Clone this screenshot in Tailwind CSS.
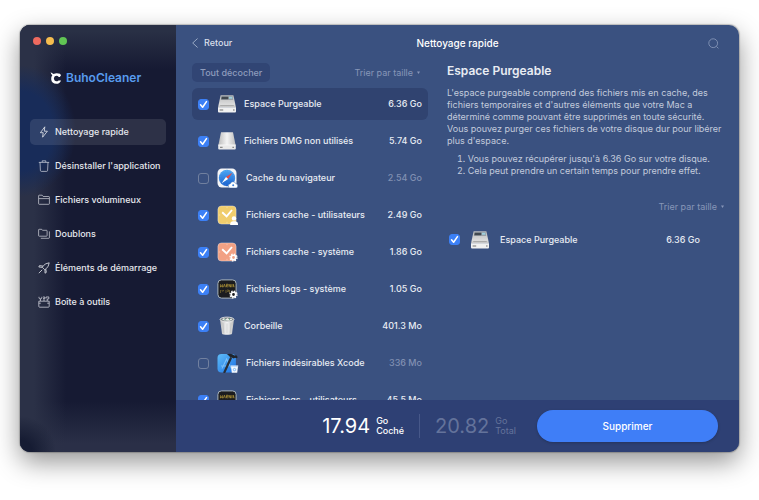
<!DOCTYPE html>
<html lang="fr">
<head>
<meta charset="utf-8">
<title>BuhoCleaner</title>
<script src="https://cdn.jsdelivr.net/npm/@tailwindcss/browser@4"></script>
</head>
<body class="h-screen overflow-hidden bg-white px-5 pt-[25px] pb-12 font-['Inter','Liberation_Sans',sans-serif] text-[9px] text-white">

<svg class="absolute size-0" aria-hidden="true">
  <defs>
    <linearGradient id="metal" x1="0" y1="0" x2="0" y2="1"><stop offset="0" stop-color="#b9babb"/><stop offset=".75" stop-color="#dcdcdc"/><stop offset="1" stop-color="#c4c4c4"/></linearGradient>
    <linearGradient id="silver" x1="0" y1="0" x2="1" y2="0"><stop offset="0" stop-color="#bcbcbc"/><stop offset=".5" stop-color="#f4f4f4"/><stop offset="1" stop-color="#bdbdbd"/></linearGradient>
    <linearGradient id="sky" x1="0" y1="0" x2="0" y2="1"><stop offset="0" stop-color="#4ba6f2"/><stop offset="1" stop-color="#1b62cf"/></linearGradient>
    <linearGradient id="xc" x1="0" y1="0" x2="1" y2="1"><stop offset="0" stop-color="#5fbdf8"/><stop offset="1" stop-color="#1b6fe4"/></linearGradient>
    <symbol id="disk" viewBox="0 0 20 20">
      <path d="M3.6 1.2h12.8l2.6 12.3H1z" fill="url(#metal)"/>
      <path d="M1 13.3h18v4.2a1 1 0 0 1-1 1H2a1 1 0 0 1-1-1z" fill="#f1f1f1"/>
      <path d="M4.4 2.2h11.2l.6 3.6H3.8z" fill="#8d959b"/>
      <path d="M4.8 2.7h6.4v2.6H4.4z" fill="#41484f"/><path d="M12 2.7h3.2l.3 2H12z" fill="#9fd0de"/>
      <path d="M3.2 11.6h13.6" stroke="#9b9b9b" stroke-width=".8"/>
      <path d="M2.6 16h3.6M16 16h1.6" stroke="#9a9a9a" stroke-width="1.4"/>
    </symbol>
    <symbol id="dmg" viewBox="0 0 20 20">
      <path d="M4 1.2h12l2.6 13H1.4z" fill="url(#silver)"/>
      <path d="M1.2 13.8h17.6v3.7a1 1 0 0 1-1 1H2.2a1 1 0 0 1-1-1z" fill="#e9e9e9"/>
      <path d="M1.4 14h17.2" stroke="#fff" stroke-width=".6"/>
      <path d="M3 16.3h2.6M15.4 16.3H17" stroke="#8b8b8b" stroke-width="1.2"/>
    </symbol>
    <symbol id="safari" viewBox="0 0 22 20">
      <rect x=".5" y=".5" width="19" height="19" rx="4.4" fill="#f4f5f7"/>
      <circle cx="10" cy="10" r="8.2" fill="url(#sky)"/>
      <circle cx="10" cy="10" r="7.200" fill="none" stroke="#b9dcfa" stroke-opacity=".5" stroke-width=".8" stroke-dasharray=".4 1.43"/>
      <path d="M15.4 4.8 9 8.9l2.1 2.2z" fill="#ef4a3f"/><path d="m4.6 15.2 4.400-6.300 2.1 2.2z" fill="#fff"/>
      <path d="M12.8 20a2.2 2.2 0 0 1 .5-4.3 2.8 2.8 0 0 1 5.3-.2A2.4 2.4 0 0 1 19.5 20z" fill="#fff" stroke="#3a6fb5" stroke-width=".5"/>
      <circle cx="16.2" cy="17.2" r="1" fill="#3a7fd8"/>
    </symbol>
    <symbol id="clock-face" viewBox="0 0 22 20">
      <rect x=".9" y=".9" width="18.2" height="18.2" rx="3.6" stroke="#fff" stroke-opacity=".35" stroke-width="1"/>
      <path d="m5.2 7.2 4.4 4.2L15 5" fill="none" stroke="#fff" stroke-width="1.9"/>
      <path d="M10 1.8v1.4M10 16.8v1.4M1.8 10h1.4" stroke="#fff" stroke-opacity=".5" stroke-width=".7"/>
    </symbol>
    <symbol id="gear" viewBox="0 0 10 10">
      <circle cx="5" cy="5" r="2.5" fill="none" stroke="#fff" stroke-width="1.9"/>
      <circle cx="5" cy="5" r="3.9" fill="none" stroke="#fff" stroke-width="1.4" stroke-dasharray="1.6 1.46"/>
    </symbol>
    <symbol id="cache-user" viewBox="0 0 22 20">
      <use href="#clock-face" fill="#f0cd6c"/>
      <circle cx="17" cy="13.4" r="2.2" fill="#fff"/><path d="M13.2 20v-1a3 3 0 0 1 3-2.8h1.8a3 3 0 0 1 3 2.8v1z" fill="#fff"/>
    </symbol>
    <symbol id="cache-system" viewBox="0 0 22 20">
      <use href="#clock-face" fill="#f2a184"/>
      <use href="#gear" x="12" y="11" width="9" height="9"/>
    </symbol>
    <symbol id="log-face" viewBox="0 0 22 20">
      <rect x=".9" y=".9" width="18.2" height="18.2" rx="3.6" fill="#1b1c1f" stroke="#a9b4ba" stroke-width="1"/>
      <path d="M3.4 5.2v3l1-1.6 1 1.6v-3M6.4 8.2l1-3 1 3M9.4 8.2v-3h1.4v1.6H9.4l1.4 1.4M12 8.2v-3l1.6 3v-3M14.8 5.2v3M16.2 8.2v-3l1 3" stroke="#c7a83a" stroke-width=".6" fill="none"/>
      <path d="M3.6 11v3M4.8 11l1 1.4 1-1.4M9 11v3M10 11h1.6v1.4H10M12.6 11v3" stroke="#9b8435" stroke-width=".6" fill="none"/>
    </symbol>
    <symbol id="log-system" viewBox="0 0 22 20">
      <use href="#log-face"/><circle cx="16.5" cy="15.5" r="2" fill="#1b1c1f"/>
      <use href="#gear" x="12" y="11" width="9" height="9"/>
    </symbol>
    <symbol id="log-user" viewBox="0 0 22 20"><use href="#log-face"/></symbol>
    <symbol id="bin" viewBox="0 0 20 20">
      <path d="M3 3.2h14l-2 14.6c-.2 1.4-9.8 1.4-10 0z" fill="url(#silver)"/>
      <ellipse cx="10" cy="3.4" rx="7" ry="2.3" fill="#7b8286" stroke="#eee" stroke-width=".8"/>
      <path d="M5 3.4 7 2l1.6 1.5L10.5 2l1.8 1.5L14.4 2.6l.8 1.2-3 1-5-.2z" fill="#eceee8"/>
      <path d="m7.6 3.2 1 1M12 2.6l1 .9" stroke="#3a9c6a" stroke-width=".9"/>
      <path d="m6 7 .8 10M10 7.4v10M14 7l-.8 10" stroke="#b5b5b5" stroke-width=".5"/>
    </symbol>
    <symbol id="xcode" viewBox="0 0 22 20">
      <rect x=".5" y="1" width="18.4" height="18.4" rx="4" fill="url(#xc)"/>
      <path d="M5 15.5 9.6 6l4.8 9.5M4 13h8" stroke="#a4dbff" stroke-opacity=".6" stroke-width="1.1" fill="none"/>
      <path d="m7.4 19.2 6.4-14" stroke="#2a2f38" stroke-width="2.2" stroke-linecap="round"/>
      <path d="M9.6 1.6c3.2-1.8 5.6-.8 8 1l1.8-.4 1.4 2-1.4 1-1.4-.4-1.2.8-4.4-2c-.6-1.2-1.4-1.6-2.8-2z" fill="#20242b"/>
      <path d="M14 13.2h7l-.8 6.6h-5.4z" fill="#f2f7fd"/><path d="M13.8 13h7.4" stroke="#cfe3fa" stroke-width="1.2"/>
      <circle cx="17.5" cy="16.6" r="1.2" fill="none" stroke="#5aa2ee" stroke-width=".7"/>
    </symbol>
    <symbol id="tick" viewBox="0 0 10 10"><path d="M2.3 5.3 4.2 7.5 7.7 2.4" fill="none" stroke="#fff" stroke-width="1.4" stroke-linecap="round" stroke-linejoin="round"/></symbol>
  </defs>
</svg>

<div class="flex h-full overflow-hidden rounded-[10px] bg-[#3a5180] shadow-[0_0_1px_1px_rgba(0,0,0,0.2),0_10px_26px_rgba(0,0,0,0.42)]">

  <aside class="flex w-[156px] shrink-0 flex-col bg-[#161a33] bg-[radial-gradient(circle_at_0%_100%,#161c33_12px,transparent_36px),radial-gradient(ellipse_56px_66px_at_0px_106px,#182c59_60%,transparent_100%),linear-gradient(to_right,#2b3147_14px,transparent_46px),linear-gradient(to_top,#2a2f47_8px,transparent_50px),linear-gradient(to_bottom,#293045_6px,transparent_44px)] px-[10px] pt-3">
    <div class="flex gap-[5px] pl-[3px]">
      <button class="size-2 rounded-full bg-[#ee6a5f]" aria-label="Fermer"></button>
      <button class="size-2 rounded-full bg-[#f5bd4f]" aria-label="Réduire"></button>
      <button class="size-2 rounded-full bg-[#61c554]" aria-label="Agrandir"></button>
    </div>
    <div class="mt-[25px] flex h-4 items-center gap-1 pl-5">
      <svg class="size-3" viewBox="0 0 12 12" aria-hidden="true">
        <path d="M.6.200 3.600 1.900Q6.500.8 10 1.800L11 3.200 9.800 5H8.800Q6.800 2.900 4.600 4.600 3.200 6.300 4.400 8.300 6.300 10.300 8.600 8.400H11Q9.800 11.800 6.300 11.800 1.600 11.600 1.200 7.200 1 4.600 2.300 3.200 1 2 .6.200z" fill="#fff"/>
      </svg>
      <span class="text-[12px] font-semibold text-[#589cee]">BuhoCleaner</span>
    </div>
    <nav class="mt-[33px] flex flex-col gap-2 font-medium text-[#e6e8ee]">
      <a href="#" class="flex h-[26px] items-center gap-[5px] rounded-[5px] bg-white/10 pl-2">
        <svg class="size-3" viewBox="0 0 12 12" fill="none" stroke="currentColor" stroke-width=".8" stroke-linejoin="round"><path d="M6.8.8 2.4 6.7h2.8L4.6 11.2 9.4 5.2H6.3z"/></svg>Nettoyage rapide</a>
      <a href="#" class="flex h-[26px] items-center gap-[5px] pl-2">
        <svg class="size-3" viewBox="0 0 12 12" fill="none" stroke="currentColor" stroke-opacity=".8" stroke-width=".8" stroke-linejoin="round"><path d="M.8 2.4h10.4M4.2 2.2V.8h3.6v1.4M2 2.4l.4 8q.1 1 1 1h5.2q.9 0 1-1l.4-8"/></svg>Désinstaller l'application</a>
      <a href="#" class="flex h-[26px] items-center gap-[5px] pl-2">
        <svg class="size-3" viewBox="0 0 12 12" fill="none" stroke="currentColor" stroke-opacity=".8" stroke-width=".8" stroke-linejoin="round"><path d="M.6 4.6V1.8q0-.6.6-.6h3l1 1.3h5.6q.6 0 .6.6v1.5M.6 4.6h10.8v5q0 .7-.7.7H1.3q-.7 0-.7-.7z"/></svg>Fichiers volumineux</a>
      <a href="#" class="flex h-[26px] items-center gap-[5px] pl-2">
        <svg class="size-3" viewBox="0 0 12 12" fill="none" stroke="currentColor" stroke-opacity=".8" stroke-width=".8" stroke-linejoin="round"><path d="M.6 1.8q0-.5.5-.5h2.6l.8 1h4q.6 0 .6.6v4.7q0 .6-.6.6H1.2q-.6 0-.6-.6zM11.4 3.4v6.2q0 .7-.7.7H2.8"/></svg>Doublons</a>
      <a href="#" class="flex h-[26px] items-center gap-[5px] pl-2">
        <svg class="size-3" viewBox="0 0 12 12" fill="none" stroke="currentColor" stroke-width=".8" stroke-linejoin="round"><path d="M11.2.8Q6.9.9 4.2 5.2l2.6 2.6Q11.1 5 11.2.8zM5 4.1 1.5 3.6.8 5l3.300.3M7.800 7.100 8.300 10.400 7 11.200V7.800M4.200 7.800.8 11.200"/></svg>Éléments de démarrage</a>
      <a href="#" class="flex h-[26px] items-center gap-[5px] pl-2">
        <svg class="size-3" viewBox="0 0 12 12" fill="none" stroke="currentColor" stroke-opacity=".85" stroke-width=".8" stroke-linejoin="round"><path d="M.8 5.2h10.4v5.2q0 .8-.8.8H1.6q-.8 0-.8-.8zM.8 7.200h2M9.2 7.200h2M2.400 5V2.800M1 .8v1.2q0 .8 1.400.8T3.800 2V.8M5 1h1.800v1.400H5M6 2.500V5M8 1l2.800-.1v2L9.200 3V5M8 1v1.600"/></svg>Boîte à outils</a>
    </nav>
  </aside>

  <main class="flex min-w-0 flex-1 flex-col">
    <header class="grid h-9 shrink-0 grid-cols-[1fr_auto_1fr] items-center px-4">
      <a href="#" class="flex items-center gap-[6px] font-medium text-[#d9dfea]">
        <svg class="h-[10px] w-[6px]" viewBox="0 0 6 10" fill="none" stroke="#a3b1cb" stroke-width=".9"><path d="M5.6.5.7 5l4.9 4.500"/></svg>Retour</a>
      <h1 class="text-[10px] font-medium">Nettoyage rapide</h1>
      <button class="mr-1 justify-self-end" aria-label="Rechercher"><svg class="size-[11px]" viewBox="0 0 11 11" fill="none" stroke="#8595b7" stroke-width=".9"><circle cx="5.2" cy="5.2" r="4.4"/><path d="m8.4 8.4 2 2"/></svg></button>
    </header>

    <div class="flex min-h-0 flex-1 gap-[19px] pr-[15px] pl-4">
      <section class="flex w-[236px] shrink-0 flex-col gap-[6px] pt-[2px]" aria-label="Catégories">
        <div class="flex shrink-0 items-center justify-between pr-2">
          <button class="h-[19px] rounded-[5px] bg-[#314574] px-2 font-medium text-[#8e9cbc]">Tout décocher</button>
          <button class="flex items-center gap-1 text-[#8796b8]">Trier par taille<svg class="size-[3px]" viewBox="0 0 4 4" fill="currentColor"><path d="M0 .5h4L2 4z"/></svg></button>
        </div>
        <ul class="flex min-h-0 flex-1 flex-col gap-[5px] overflow-hidden font-medium text-[#e8ecf3]">
          <li class="shrink-0"><label class="flex h-8 items-center rounded-[6px] bg-[#304370] px-[6px]"><span class="grid size-[11px]"><input type="checkbox" checked class="peer col-start-1 row-start-1 size-[11px] appearance-none rounded-[3px] border border-[#71809f] checked:border-[#3c80f6] checked:bg-[#3c80f6]"><svg class="pointer-events-none invisible col-start-1 row-start-1 size-[11px] peer-checked:visible"><use href="#tick"/></svg></span><svg class="ml-2 h-5 w-5"><use href="#disk"/></svg><span class="ml-[7px] flex-1">Espace Purgeable</span><span>6.36 Go</span></label></li>
          <li class="shrink-0"><label class="flex h-8 items-center px-[6px]"><span class="grid size-[11px]"><input type="checkbox" checked class="peer col-start-1 row-start-1 size-[11px] appearance-none rounded-[3px] border border-[#71809f] checked:border-[#3c80f6] checked:bg-[#3c80f6]"><svg class="pointer-events-none invisible col-start-1 row-start-1 size-[11px] peer-checked:visible"><use href="#tick"/></svg></span><svg class="ml-2 h-5 w-5"><use href="#dmg"/></svg><span class="ml-[7px] flex-1">Fichiers DMG non utilisés</span><span>5.74 Go</span></label></li>
          <li class="shrink-0"><label class="flex h-8 items-center px-[6px]"><span class="grid size-[11px]"><input type="checkbox" class="peer col-start-1 row-start-1 size-[11px] appearance-none rounded-[3px] border border-[#71809f] checked:border-[#3c80f6] checked:bg-[#3c80f6]"><svg class="pointer-events-none invisible col-start-1 row-start-1 size-[11px] peer-checked:visible"><use href="#tick"/></svg></span><svg class="ml-2 h-5 w-[22px]"><use href="#safari"/></svg><span class="ml-[7px] flex-1">Cache du navigateur</span><span class="text-[#8190b2]">2.54 Go</span></label></li>
          <li class="shrink-0"><label class="flex h-8 items-center px-[6px]"><span class="grid size-[11px]"><input type="checkbox" checked class="peer col-start-1 row-start-1 size-[11px] appearance-none rounded-[3px] border border-[#71809f] checked:border-[#3c80f6] checked:bg-[#3c80f6]"><svg class="pointer-events-none invisible col-start-1 row-start-1 size-[11px] peer-checked:visible"><use href="#tick"/></svg></span><svg class="ml-2 h-5 w-[22px]"><use href="#cache-user"/></svg><span class="ml-[7px] flex-1">Fichiers cache - utilisateurs</span><span>2.49 Go</span></label></li>
          <li class="shrink-0"><label class="flex h-8 items-center px-[6px]"><span class="grid size-[11px]"><input type="checkbox" checked class="peer col-start-1 row-start-1 size-[11px] appearance-none rounded-[3px] border border-[#71809f] checked:border-[#3c80f6] checked:bg-[#3c80f6]"><svg class="pointer-events-none invisible col-start-1 row-start-1 size-[11px] peer-checked:visible"><use href="#tick"/></svg></span><svg class="ml-2 h-5 w-[22px]"><use href="#cache-system"/></svg><span class="ml-[7px] flex-1">Fichiers cache - système</span><span>1.86 Go</span></label></li>
          <li class="shrink-0"><label class="flex h-8 items-center px-[6px]"><span class="grid size-[11px]"><input type="checkbox" checked class="peer col-start-1 row-start-1 size-[11px] appearance-none rounded-[3px] border border-[#71809f] checked:border-[#3c80f6] checked:bg-[#3c80f6]"><svg class="pointer-events-none invisible col-start-1 row-start-1 size-[11px] peer-checked:visible"><use href="#tick"/></svg></span><svg class="ml-2 h-5 w-[22px]"><use href="#log-system"/></svg><span class="ml-[7px] flex-1">Fichiers logs - système</span><span>1.05 Go</span></label></li>
          <li class="shrink-0"><label class="flex h-8 items-center px-[6px]"><span class="grid size-[11px]"><input type="checkbox" checked class="peer col-start-1 row-start-1 size-[11px] appearance-none rounded-[3px] border border-[#71809f] checked:border-[#3c80f6] checked:bg-[#3c80f6]"><svg class="pointer-events-none invisible col-start-1 row-start-1 size-[11px] peer-checked:visible"><use href="#tick"/></svg></span><svg class="ml-2 h-5 w-5"><use href="#bin"/></svg><span class="ml-[7px] flex-1">Corbeille</span><span>401.3 Mo</span></label></li>
          <li class="shrink-0"><label class="flex h-8 items-center px-[6px]"><span class="grid size-[11px]"><input type="checkbox" class="peer col-start-1 row-start-1 size-[11px] appearance-none rounded-[3px] border border-[#71809f] checked:border-[#3c80f6] checked:bg-[#3c80f6]"><svg class="pointer-events-none invisible col-start-1 row-start-1 size-[11px] peer-checked:visible"><use href="#tick"/></svg></span><svg class="ml-2 h-5 w-[22px]"><use href="#xcode"/></svg><span class="ml-[7px] flex-1">Fichiers indésirables Xcode</span><span class="text-[#8190b2]">336 Mo</span></label></li>
          <li class="shrink-0"><label class="flex h-8 items-center px-[6px]"><span class="grid size-[11px]"><input type="checkbox" checked class="peer col-start-1 row-start-1 size-[11px] appearance-none rounded-[3px] border border-[#71809f] checked:border-[#3c80f6] checked:bg-[#3c80f6]"><svg class="pointer-events-none invisible col-start-1 row-start-1 size-[11px] peer-checked:visible"><use href="#tick"/></svg></span><svg class="ml-2 h-5 w-[22px]"><use href="#log-user"/></svg><span class="ml-[7px] flex-1">Fichiers logs - utilisateurs</span><span>45.5 Mo</span></label></li>
        </ul>
      </section>

      <section class="flex min-w-0 flex-1 flex-col pt-[2px]" aria-labelledby="detail-title">
        <h2 id="detail-title" class="text-[12px] leading-4 font-semibold text-[#e8ecf3]">Espace Purgeable</h2>
        <div class="mt-2 leading-[12px] text-[#c3cbdc]">
          <p>L'espace purgeable comprend des fichiers mis en cache, des<br>fichiers temporaires et d'autres éléments que votre Mac a<br>déterminé comme pouvant être supprimés en toute sécurité.<br>Vous pouvez purger ces fichiers de votre disque dur pour libérer<br>plus d'espace.</p>
          <ol class="mt-[6px] list-inside list-decimal pl-[10px]">
            <li>Vous pouvez récupérer jusqu'à 6.36 Go sur votre disque.</li>
            <li>Cela peut prendre un certain temps pour prendre effet.</li>
          </ol>
        </div>
        <button class="mt-[23px] flex items-center gap-1 self-end text-[#8796b8]">Trier par taille<svg class="size-[3px]" viewBox="0 0 4 4" fill="currentColor"><path d="M0 .5h4L2 4z"/></svg></button>
        <label class="mt-[10px] mr-6 flex h-8 items-center pl-[2px] font-medium text-[#e8ecf3]"><span class="grid size-[11px]"><input type="checkbox" checked class="peer col-start-1 row-start-1 size-[11px] appearance-none rounded-[3px] border border-[#71809f] checked:border-[#3c80f6] checked:bg-[#3c80f6]"><svg class="pointer-events-none invisible col-start-1 row-start-1 size-[11px] peer-checked:visible"><use href="#tick"/></svg></span><svg class="ml-[10px] h-5 w-5"><use href="#disk"/></svg><span class="ml-[10px] flex-1">Espace Purgeable</span><span>6.36 Go</span></label>
      </section>
    </div>

    <footer class="flex h-[52px] shrink-0 items-center justify-end bg-[#2e4074] pr-[21px]">
      <div class="flex items-center gap-[6px]"><span class="text-[20px]">17.94</span><span class="leading-[10px] font-medium">Go<br>Coché</span></div>
      <div class="mx-[15px] h-6 w-px bg-[#475889]"></div>
      <div class="flex items-center gap-[6px] text-[#64739b]"><span class="text-[20px]">20.82</span><span class="leading-[10px]">Go<br>Total</span></div>
      <button class="ml-[21px] h-8 w-[181px] rounded-full bg-[#3f7ef7] text-[10px] font-medium shadow-[0_1px_3px_rgba(0,0,0,0.2)]">Supprimer</button>
    </footer>
  </main>
</div>
</body>
</html>
